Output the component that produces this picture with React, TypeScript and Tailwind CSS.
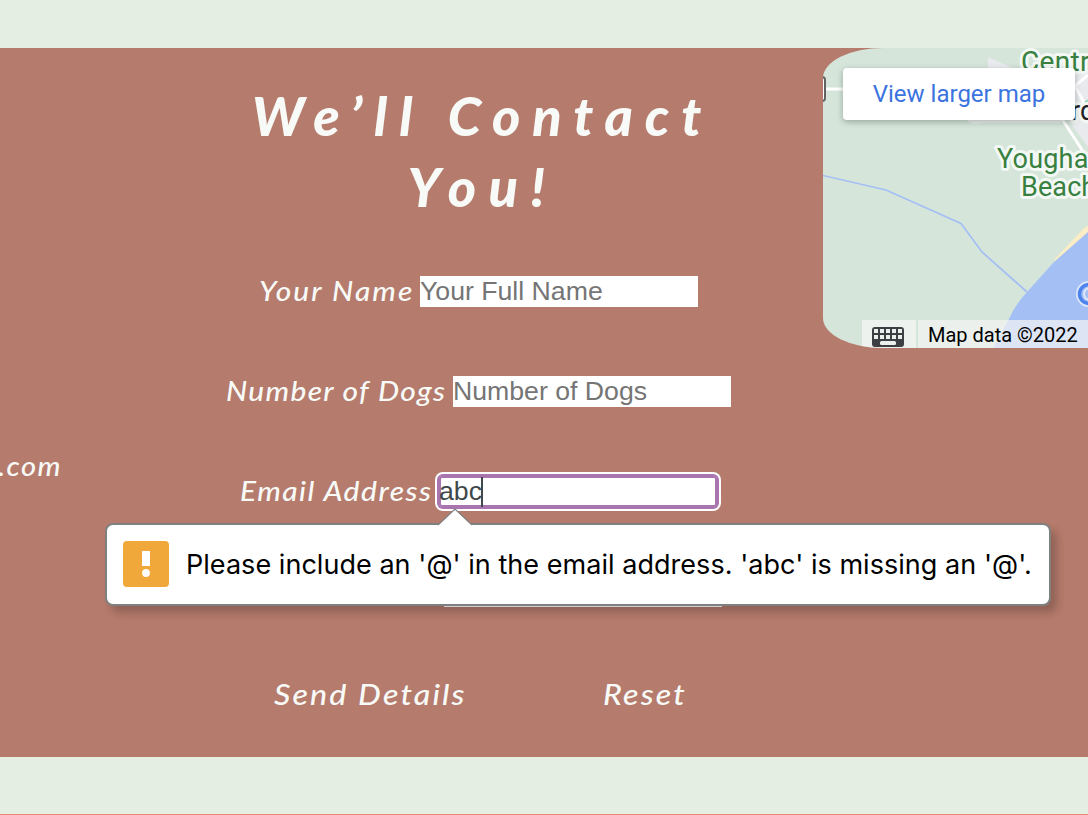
import type { ReactNode } from "react";

const script = "font-['Lato',sans-serif] italic text-[#f8faf7]";

function Row({ label, children }: { label: ReactNode; children: ReactNode }) {
  return (
    <div className="flex h-[31px] items-center justify-center">
      {label}
      {children}
    </div>
  );
}

function MapPanel() {
  return (
    <div className="relative h-[300px] w-[265px] shrink-0 overflow-hidden rounded-l-[60px_30px] bg-[#d5e5da]">
      <svg width="265" height="300" viewBox="0 0 265 300" className="block">
        <path d="M165 9 192 21H265V99L238 62 220 72H165Z" fill="#e8eaed" />
        <path d="M0 41H30M237 68 265 111M252 38 265 27M252 38 265 62" fill="none" stroke="#fff" strokeWidth="3" />
        <rect x="-10" y="29" width="12" height="24" rx="3" fill="#fff" stroke="#626262" strokeWidth="2" />
        <path d="M261 54 265 51V57Z" fill="#9ed0aa" />
        <path d="M147 71Q152 74 158 72H236" fill="none" stroke="#ecf1ee" strokeWidth="6" strokeLinecap="round" />
        <path d="M0 127.500 63 142 138 175.500 159 204 204 244" fill="none" stroke="#a4bff4" strokeWidth="1.700" />
        <path d="M231 212 261 180 265 178V189L234 214Z" fill="#faedc5" />
        <path d="M265 184 231 214 204 244Q192 257 186 271L170 300H265Z" fill="#a4bff4" />
        <circle cx="266" cy="246" r="13" fill="#dce7fb" />
        <circle cx="266" cy="246" r="9.500" fill="#a4bff4" stroke="#4d83ed" strokeWidth="3.500" />
        <circle cx="267" cy="246" r="6" fill="#a4bff4" stroke="#dce7fb" strokeWidth="2" />
        <g fontFamily="Roboto, sans-serif" fontSize="27" stroke="#f3f8f4" strokeWidth="6" strokeLinejoin="round" paintOrder="stroke">
          <text x="198" y="22.500" fontSize="28" letterSpacing="0.3" fill="#38803f">Centr</text>
          <text x="248" y="72" fontSize="27" fill="#202124">rd</text>
          <text x="174" y="120" fill="#38803f" letterSpacing="0.2">Yougha</text>
          <text x="198" y="148" fill="#38803f" letterSpacing="0.1">Beach</text>
        </g>
      </svg>
      <a className="absolute left-[20px] top-[20px] flex h-[52px] w-[232px] items-center justify-center rounded-[4px] bg-white font-['Roboto',sans-serif] text-[24px] text-[#3b73df] shadow-[0_2px_6px_rgba(0,0,0,0.28)]">
        View larger map
      </a>
      <div className="absolute bottom-0 left-[39px] flex h-[28px] w-[226px] gap-[2px] font-['Roboto',sans-serif] text-[20px] text-black">
        <span className="flex w-[54px] justify-center bg-[#f5f5f5]/75 pr-[2px] pt-[7px]">
          <svg width="32" height="20" viewBox="0 0 32 20">
            <rect width="32" height="20" rx="3" fill="#3c4043" />
            <path d="M2 2h4v4H2zM8 2h4v4H8zM14 2h4v4h-4zM20 2h4v4h-4zM26 2h4v4h-4zM2 8h4v4H2zM8 8h4v4H8zM14 8h4v4h-4zM20 8h4v4h-4zM26 8h4v4h-4z" fill="#ecf0ed" />
            <rect x="8" y="14" width="16" height="4" rx="1.500" fill="#ecf0ed" />
          </svg>
        </span>
        <span className="flex-1 whitespace-nowrap bg-[#f5f5f5]/70 pl-[10px] leading-[30px]">Map data ©2022</span>
      </div>
    </div>
  );
}

function ValidationBubble() {
  return (
    <div className="absolute left-[105px] top-[475px] flex h-[83px] w-[946px] items-center rounded-[8px] border-2 border-[#808080] bg-white pb-px pl-[16px] shadow-[6px_7px_9px_rgba(0,0,0,0.2)]">
      <svg width="36" height="18" viewBox="0 0 36 18" className="absolute left-[330px] top-[-17px]">
        <path d="M0 18 18 1 36 18Z" fill="#fff" />
        <path d="M1 17 18 1 35 17" fill="none" stroke="#808080" strokeWidth="1.200" />
      </svg>
      <svg width="46" height="46" viewBox="0 0 46 46" className="shrink-0">
        <rect width="46" height="46" rx="4" fill="#f1a83b" />
        <path d="M19 10h8v15h-8z" fill="#fff" />
        <circle cx="23" cy="32" r="3.900" fill="#fff" />
      </svg>
      <span className="ml-[17px] whitespace-nowrap pt-[2px] font-['Inter',sans-serif] text-[27px] leading-[32px] tracking-[0.04px] text-black">
        Please include an '@' in the email address. 'abc' is missing an '@'.
      </span>
    </div>
  );
}

export default function App() {
  const input =
    "h-[31px] w-[278px] shrink-0 bg-white p-0 font-['Liberation_Sans',sans-serif] text-[26.660px] leading-[31px] text-[#3f484b] placeholder:text-[#757575] placeholder:opacity-100 outline-none";
  const label = `${script} block origin-left scale-x-[1.15] whitespace-nowrap text-[26px] font-medium`;
  return (
    <div className="h-[815px] w-[1088px] overflow-hidden bg-[#e4eee3] pt-[48px]">
      <main className="relative flex h-[709px] bg-[#b57b6c]">
        <div className="w-[134px] shrink-0 pt-[402px]">
          <span className={`${script} flex w-[62px] origin-right scale-x-[1.12] justify-end whitespace-nowrap text-[26px] font-medium leading-[32px] tracking-[1.300px]`}>.com</span>
        </div>
        <form className="flex w-[689px] shrink-0 flex-col pt-[32px]" noValidate>
          <h1 className={`${script} h-[142px] pl-[8px] text-center text-[54px] font-black leading-[71px]`}>
            <span className="block whitespace-nowrap tracking-[11.900px]">We’ll Contact</span>
            <span className="block whitespace-nowrap tracking-[12.500px]">You!</span>
          </h1>
          <div className="mt-[54px] flex flex-col gap-[69px]">
            <Row label={<label className="w-[161px]"><span className={`${label} tracking-[1.800px]`}>Your Name</span></label>}>
              <input className={input} placeholder="Your Full Name" />
            </Row>
            <Row label={<label className="w-[227px]"><span className={`${label} tracking-[1.140px]`}>Number of Dogs</span></label>}>
              <input className={input} placeholder="Number of Dogs" />
            </Row>
            <Row label={<label className="w-[199px]"><span className={`${label} tracking-[1.300px]`}>Email Address</span></label>}>
              <div className="h-[31px] rounded-[4px] bg-white shadow-[0_0_0_2px_#a875ae,0_0_0_4px_#fff]">
                <div className="flex h-[31px] w-[278px] items-center rounded-[3px] shadow-[inset_0_0_0_2px_#a875ae]">
                  <span className="font-['Liberation_Sans',sans-serif] text-[26.660px] leading-[31px] text-[#3f484b]">abc</span>
                  <span className="-ml-px h-[30px] w-[2px] bg-[#3f484b]" />
                </div>
              </div>
            </Row>
            <Row label={<span className="w-[209px]" />}>
              <input className={input} />
            </Row>
          </div>
          <div className={`${script} mt-[69px] flex gap-[137px] pl-[140px] text-[28px] font-medium leading-[36px]`}>
            <button type="button" className="w-[192px] origin-left scale-x-[1.15] whitespace-nowrap text-left tracking-[1.850px]">Send Details</button>
            <button type="button" className="origin-left scale-x-[1.15] whitespace-nowrap text-left tracking-[1.850px]">Reset</button>
          </div>
        </form>
        <MapPanel />
        <ValidationBubble />
      </main>
      <div className="h-[57px]" />
      <div className="h-px bg-[#e8896d]" />
    </div>
  );
}
